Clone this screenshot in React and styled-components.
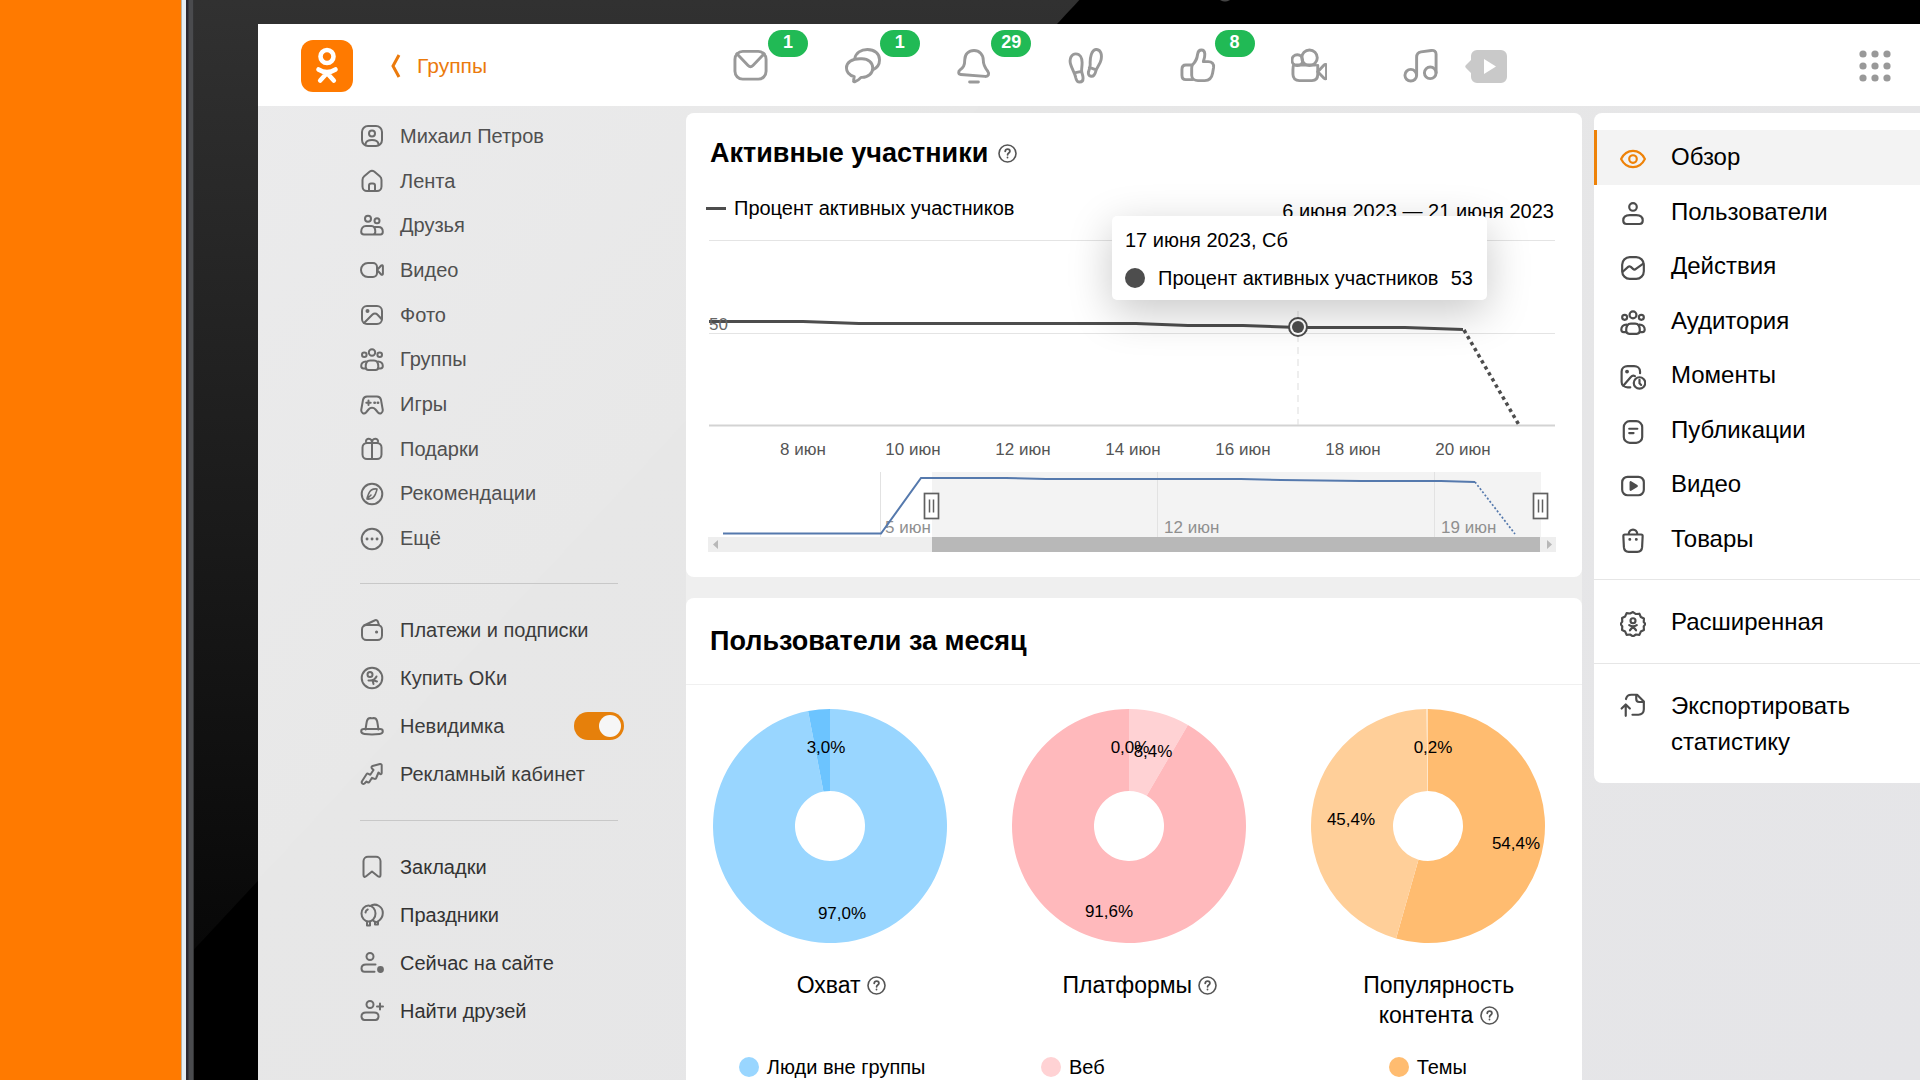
import React, { useState } from 'react';
import styled, { createGlobalStyle } from 'styled-components';

const GlobalStyle = createGlobalStyle`
  * {
    box-sizing: border-box;
  }

  body {
    margin: 0;
    background-color: #ff7a00;
    font-family: "Liberation Sans", Arial, sans-serif;
    font-size: 20px;
    color: #000;
  }
`;

const Page = styled.div`
  display: flex;
  height: 100vh;
  overflow: hidden;
`;

const Backdrop = styled.div`
  flex: 0 0 181px;
  background-color: #ff7a00;
`;

const TabletEdge = styled.div`
  flex: 0 0 13px;
  background: linear-gradient(90deg, #b9b4a8 1px, #e6edf4 1px 5px, #2b2830 5px 7px, #4a4b4e 8px 12px, #1c1c1c 13px);
`;

/* black glass with a diagonal highlight in the top left corner */
const Bezel = styled.div`
  flex: 1;
  min-width: 0;
  display: flex;
  padding: 24px 0 0 64px;
  background:
    radial-gradient(circle at 1031px -7px, #444 8px, transparent 9px),
    linear-gradient(133deg, transparent 647px, #000 648px),
    linear-gradient(#313131, #080808 944px);
`;

const Screen = styled.div`
  flex: 1;
  min-width: 0;
  display: flex;
  flex-direction: column;
  background: linear-gradient(133deg, #ebebec, #e8e8e8 583px, #e7e7e7 584px, #e5e5e8);
`;

const Header = styled.header`
  flex: 0 0 82px;
  display: flex;
  align-items: center;
  padding: 2px 29px 0 0;
  background-color: #fff;
`;

const Brand = styled.div`
  flex: 0 0 475px;
  display: flex;
  align-items: center;
  padding-left: 43px;
`;

const LogoLink = styled.a`
  display: flex;
`;

const BackLink = styled.a`
  display: flex;
  align-items: center;
  gap: 16px;
  margin-left: 37px;
  color: #eb7a0c;
  font-size: 21px;
  text-decoration: none;
`;

const Toolbar = styled.nav`
  flex: 0 1 706px;
  display: flex;
  justify-content: space-between;
`;

const ToolbarLink = styled.a`
  position: relative;
  display: flex;
  color: #999;
`;

const Badge = styled.span`
  position: absolute;
  left: 35px;
  top: -18px;
  width: 40px;
  height: 27px;
  border-radius: 14px;
  background-color: #21ba55;
  color: #fff;
  font-size: 18px;
  font-weight: bold;
  line-height: 24px;
  text-align: center;
`;

const PlayButton = styled.button`
  display: flex;
  margin-left: 26px;
  padding: 0;
  border: none;
  background: none;
  cursor: pointer;
`;

const AppsButton = styled(PlayButton)`
  margin-left: auto;
`;

const Body = styled.div`
  flex: 1;
  min-height: 0;
  display: flex;
  padding-top: 7px;
`;

const Sidebar = styled.aside`
  flex: 0 0 428px;
  padding: 1px 68px 0 102px;
`;

const NavList = styled.ul`
  display: grid;
  grid-auto-rows: 1fr;
  height: ${(p) => p.$height}px;
  margin: 0;
  padding: 0;
  list-style: none;
`;

const NavRow = styled.li`
  display: flex;
  align-items: center;
  justify-content: space-between;
  margin-right: -6px;
`;

const NavLink = styled.a`
  display: flex;
  align-items: center;
  gap: 16px;
  color: ${(p) => p.$color};
  text-decoration: none;
  white-space: nowrap;

  svg {
    color: #6c6c6c;
  }
`;

const Divider = styled.hr`
  height: 1px;
  margin: 22px 0;
  border: none;
  background-color: #c8c8c8;
`;

const Switch = styled.input`
  appearance: none;
  width: 50px;
  height: 28px;
  margin: 0;
  padding: 3px;
  border-radius: 14px;
  background-color: ${(p) => (p.checked ? '#e6800b' : '#b5b5b5')};
  cursor: pointer;

  &::before {
    content: '';
    display: block;
    width: 22px;
    height: 22px;
    margin-left: ${(p) => (p.checked ? '22px' : '0')};
    border-radius: 50%;
    background-color: #f6f6f6;
  }
`;

const Main = styled.main`
  flex: 1;
  min-width: 0;
  display: flex;
  flex-direction: column;
  gap: 21px;
  border-radius: 8px 8px 0 0;
  background-color: #efefef;
`;

const Card = styled.section`
  flex: ${(p) => (p.$fill ? '1 0 auto' : '0 0 auto')};
  position: relative;
  border-radius: ${(p) => (p.$fill ? '8px 8px 0 0' : '8px')};
  background-color: #fff;
`;

const CardTitle = styled.h2`
  display: flex;
  align-items: center;
  gap: 10px;
  margin: 0;
  padding: ${(p) => p.$pad};
  font-size: 27px;
  line-height: 32px;
`;

const HelpButton = styled.button`
  display: inline-flex;
  padding: 0;
  border: none;
  background: none;
  color: #555;
  vertical-align: -2px;
  cursor: pointer;
`;

const ChartHead = styled.div`
  display: flex;
  justify-content: space-between;
  height: 27px;
  margin-top: 27px;
  padding: 0 28px 0 20px;
  line-height: 24px;
`;

const ChartLegend = styled.div`
  display: flex;
  align-items: center;
  align-self: flex-start;
  gap: 8px;

  &::before {
    content: '';
    width: 20px;
    height: 3px;
    background-color: #4d4d4d;
  }
`;

const Period = styled.div`
  align-self: flex-end;
`;

const ChartSvg = styled.svg`
  display: block;
  width: 100%;
  height: auto;
`;

const Tooltip = styled.div`
  position: absolute;
  top: 103px;
  left: 426px;
  width: 375px;
  padding: 12px 14px 10px 13px;
  border-radius: 5px;
  background-color: #fff;
  box-shadow: 0 12px 44px rgba(0, 0, 0, 0.22);
  line-height: 24px;
`;

const TooltipRow = styled.div`
  display: flex;
  align-items: center;
  margin-top: 14px;
`;

const Dot = styled.span`
  flex: 0 0 20px;
  height: 20px;
  border-radius: 50%;
  background-color: ${(p) => p.$color};
`;

const TooltipLabel = styled.span`
  flex: 1;
  margin-left: 13px;
`;

const PieGrid = styled.div`
  display: grid;
  grid-template-columns: repeat(3, 1fr);
  margin-top: 27px;
  border-top: 1px solid #f0f0f0;
  padding-top: 24px;
`;

const PieColumn = styled.div`
  display: grid;
  grid-template-rows: 234px 60px auto;
  row-gap: 26px;
  justify-items: center;
`;

const PieSvg = styled.svg`
  width: 234px;
  margin-right: 10px;
  overflow: visible;
`;

const PieTitle = styled.h3`
  width: 190px;
  margin: 1px 0 0 12px;
  font-size: 23px;
  font-weight: normal;
  line-height: 30px;
  text-align: center;
`;

const PieLegend = styled.div`
  display: flex;
  align-items: center;
  gap: 8px;
  width: ${(p) => p.$width}px;
  margin-right: 10px;
  line-height: 24px;
  white-space: nowrap;
`;

const Panel = styled.aside`
  flex: 0 0 326px;
  align-self: flex-start;
  margin-left: 12px;
  padding: 17px 0 23px;
  border-radius: 8px 0 0 8px;
  background-color: #fff;
`;

const PanelList = styled.div`
  display: grid;
  grid-auto-rows: 1fr;
  height: 436px;
`;

const PanelLink = styled.a`
  display: flex;
  align-items: ${(p) => (p.$multiline ? 'flex-start' : 'center')};
  gap: 25px;
  padding-left: 23px;
  border-left: 3px solid ${(p) => (p.$active ? '#ee8208' : 'transparent')};
  background-color: ${(p) => (p.$active ? '#f3f3f3' : 'transparent')};
  color: #000;
  font-size: 24px;
  line-height: 36px;
  text-decoration: none;

  svg {
    flex: none;
    margin-top: 4px;
    color: ${(p) => (p.$active ? '#ee8208' : '#4c4c4c')};
  }
`;

const PanelSection = styled.div`
  margin-top: ${(p) => p.$top}px;
  padding-top: 24px;
  border-top: 1px solid #e6e6e6;
`;

const icons = {
  profile: (
    <>
      <rect x="2" y="2" width="20" height="20" rx="6" />
      <circle cx="12" cy="9.5" r="3" />
      <path d="M5.500 20c.5-3 3.600-4 6.500-4s6 1 6.500 4" />
    </>
  ),
  feed: (
    <>
      <path d="M2.500 11c0-1.500.6-2.800 1.700-3.700l5.600-4.700a3.400 3.400 0 0 1 4.400 0l5.600 4.700c1.100.9 1.700 2.200 1.700 3.700v6.500a4.500 4.500 0 0 1-4.500 4.500h-10a4.500 4.500 0 0 1-4.500-4.500z" />
      <path d="M9 22v-5.500a2 2 0 0 1 2-2h2a2 2 0 0 1 2 2V22" />
    </>
  ),
  friends: (
    <>
      <circle cx="8" cy="4.800" r="3" />
      <circle cx="17" cy="6.800" r="2.500" />
      <path d="M6 12h5.500c2.500 0 3.800 2.500 3.800 5.800 0 1.800-1 2.800-2.300 2.800H4c-1.800 0-2.800-1-2.800-2.800C1.200 14.500 3 12 6 12zM14 13h4.500c2.600 0 4.300 2 4.300 4.800 0 1.800-1 2.800-2.300 2.800H13" />
    </>
  ),
  video: (
    <>
      <path d="M8 5h5a4 4 0 0 1 4 4v6a4 4 0 0 1-4 4H8a7 7 0 0 1 0-14z" />
      <path d="M17.500 11.500l3.700-4c.7-.7 1.700-.3 1.700.7v7.600c0 1-1 1.400-1.700.7l-3.700-4" />
    </>
  ),
  photo: (
    <>
      <rect x="2" y="3" width="20" height="18" rx="5" />
      <circle cx="7.500" cy="8" r="1" fill="currentColor" />
      <path d="M4 20l8.500-8.500c1.500-1.500 3.500-1.500 4.800 0L21.500 16" />
    </>
  ),
  groups: (
    <>
      <circle cx="12" cy="4.500" r="3.200" />
      <circle cx="4.300" cy="6.800" r="2.300" />
      <circle cx="19.700" cy="6.800" r="2.300" />
      <path d="M10 12.500h4c3 0 4.300 2.600 4.300 6.200 0 2-1 3.300-2.800 3.300h-7c-1.800 0-2.800-1.300-2.800-3.300 0-3.600 1.300-6.200 4.300-6.200z" />
      <path d="M6 13.500c-3 0-4.800 2-4.800 4.500 0 1.600.8 2.400 2.300 2.400h2M18 13.500c3 0 4.800 2 4.800 4.500 0 1.600-.8 2.400-2.300 2.400h-2" />
    </>
  ),
  games: (
    <>
      <path d="M7 3.500h10c2 0 3.500 1.300 4 3.300l1.700 9.700c.5 3.500-2.700 5.200-4.700 3l-2.500-3c-2-2.200-5-2.200-7 0l-2.500 3c-2 2.200-5.200.5-4.700-3L3 6.800c.5-2 2-3.300 4-3.300z" />
      <path d="M6.300 9.700h4.400M8.500 7.500v4.400" />
      <path d="M14.500 9.700h.3M17.800 9.700h.3" strokeWidth="2.600" />
    </>
  ),
  gifts: (
    <>
      <rect x="2.500" y="6" width="19" height="16" rx="4.500" />
      <path d="M12 6v16M12 6c0-6-6.500-5-6-1.500.2 1 1 1.500 1 1.500M12 6c0-6 6.500-5 6-1.500-.2 1-1 1.500-1 1.500" />
    </>
  ),
  compass: (
    <>
      <circle cx="12" cy="12" r="10.300" />
      <path d="M17 7c-4-.5-7 1.500-8.300 4.600C7.800 13.700 7.200 15 7 17c4 .500 7-1.500 8.300-4.600C16.200 10.300 16.800 9 17 7zM7 17l4-4" strokeWidth="1.600" />
    </>
  ),
  more: (
    <>
      <circle cx="12" cy="12" r="10.300" />
      <path d="M7 12h.1M12 12h.1M17 12h.1" strokeWidth="2.800" />
    </>
  ),
  wallet: (
    <>
      <rect x="2" y="7" width="20" height="15" rx="4.500" />
      <path d="M4 7.500l10.500-5c1.500-.8 2.800-.3 3.400 1.200l1.100 3.300" />
      <path d="M16.500 14h.1" strokeWidth="3" />
    </>
  ),
  oki: (
    <>
      <circle cx="12" cy="12" r="10.300" />
      <circle cx="10" cy="8.500" r="2.500" />
      <path d="M8.500 14.500c3.500.5 6.500-1 8-4M12.500 14l1 4M12.500 14l4.500 1.500" />
    </>
  ),
  hat: (
    <>
      <path d="M5.500 15.500c.5-3 .8-5.500 1.300-8C7.300 5 8.500 4 10.300 4c1.200.5 2.200.5 3.400 0 1.800 0 3 1 3.500 3.500.5 2.500.8 5 1.300 8" />
      <path d="M4 15h16c1.800 0 2.800 1 2.800 2.300 0 1.400-1 2.400-3.300 2.700-4 .5-11 .5-15 0-2.300-.3-3.300-1.300-3.300-2.700C1.200 16 2.200 15 4 15z" />
    </>
  ),
  ads: (
    <path d="M12.500 4l7.500-2c1-.2 1.700.3 1.700 1.300V11c0 1.200-1 1.600-1.900.8l-1.300-1.300-2.300 5.500c-.5 1-1.200 1.200-2.200.7L12 15.800l-2.500 4c-.4.700-1 .8-1.800.5L6.500 19.500l-2 2c-1.500 1.200-3.500-.5-2.500-2.200l4.500-7c.5-.8 1.200-.9 2-.5l1.800 1L13.500 8l-1.500-1.500c-.8-.9-.6-2.200.5-2.500z" />
  ),
  bookmark: (
    <path d="M3.500 6A4.500 4.500 0 0 1 8 1.800h8A4.500 4.500 0 0 1 20.500 6v14c0 1.800-1.300 2.400-2.600 1.300L12 16.500l-5.900 4.800c-1.300 1.100-2.600.5-2.600-1.300z" />
  ),
  balloons: (
    <>
      <ellipse cx="8.500" cy="10.500" rx="7" ry="8" />
      <path d="M10 3c6-3.500 12.800.5 12.800 7 0 3.500-1.800 6.500-4.800 8.500M13 17.500c1 1 2 1.500 3.500 1.500M5.500 9.500c.2-1.500 1-2.500 2.200-3" />
      <path d="M7 19.500v3M10 19.500v3M15 19v2.500M18 18.500v2.500M7 22.500h3M15 21.500h3" />
    </>
  ),
  online: (
    <>
      <circle cx="10" cy="5.500" r="3.500" />
      <path d="M15.500 13.500H6c-3 0-4.500 1.800-4.500 4 0 2 1.300 3.200 3 3.200h10" />
      <circle cx="20.500" cy="18.500" r="2.400" fill="currentColor" />
    </>
  ),
  addFriend: (
    <>
      <circle cx="10" cy="5.500" r="3.500" />
      <path d="M6 13.500h8c3 0 4.500 1.600 4.500 3.800 0 2.300-1.300 3.700-3 3.700h-11c-1.700 0-3-1.400-3-3.700 0-2.200 1.500-3.800 4.500-3.800zM17 7.500h6M20 4.500v6" />
    </>
  ),
  eye: (
    <>
      <path d="M1 12c2.500-5 6.500-7.500 11-7.500s8.500 2.500 11 7.500c-2.500 5-6.500 7.500-11 7.500S3.500 17 1 12z" />
      <circle cx="12" cy="12" r="3.500" />
    </>
  ),
  user: (
    <>
      <circle cx="12" cy="5.500" r="3.500" />
      <path d="M9 13h6c4 0 6 2.200 6 5 0 2-1.200 3.200-3 3.200H6c-1.800 0-3-1.200-3-3.200 0-2.800 2-5 6-5z" />
    </>
  ),
  activity: (
    <>
      <rect x="2" y="2" width="20" height="20" rx="7" />
      <path d="M2.500 15.500L7.500 11c.8-.7 1.700-.6 2.500 0l2 1.800c.9.800 1.900.7 2.700 0L21.500 8" />
    </>
  ),
  moments: (
    <>
      <path d="M9.500 21.500H7c-3 0-5.500-2-5.500-5V7c0-3 2.500-5 5.500-5h6c3 0 5.500 2 5.500 5v1.500" />
      <circle cx="6.500" cy="7" r=".8" fill="currentColor" />
      <path d="M3 20l7-8c1-1.200 2.500-1.600 3.800-.8" />
      <circle cx="18" cy="17.500" r="5.300" />
      <path d="M18 14.500v3.300l1.500 1.500" />
    </>
  ),
  posts: (
    <>
      <rect x="3.500" y="2" width="17" height="20" rx="5.500" />
      <path d="M8.500 9h7.500M8.500 13h4" />
    </>
  ),
  player: (
    <>
      <rect x="2" y="3.500" width="20" height="17" rx="5" />
      <path d="M9.800 8.500v7l5.700-3.500z" fill="currentColor" />
    </>
  ),
  goods: (
    <>
      <path d="M4.500 6h15c1 0 1.500.7 1.400 1.700l-.5 10c-.2 2.700-1.900 4.300-4.400 4.300H8c-2.500 0-4.200-1.600-4.400-4.300l-.5-10C3 6.700 3.500 6 4.500 6zM8 6c0-6 8-6 8 0" />
      <path d="M9 10.500h.1M15 10.500h.1" strokeWidth="2.600" />
    </>
  ),
  advanced: (
    <>
      <path d="M12 1l2.700 1.800 3.200-.3 1.300 3 2.900 1.500-.2 3.200L23.500 12l-1.600 2.300.2 3.200-2.900 1.500-1.300 3-3.200-.3L12 23.500l-2.700-1.800-3.200.3-1.300-3-2.900-1.500.2-3.200L.5 12l1.600-2.300-.2-3.200 2.900-1.500 1.300-3 3.200.3z" />
      <circle cx="12" cy="9" r="2.300" />
      <path d="M8.500 13c2.300 1.500 4.700 1.500 7 0M12 14.300l-2.800 3.500M12 14.300l2.800 3.500" />
    </>
  ),
  exportFile: (
    <>
      <path d="M5.500 6.500C6 4 8 2.500 10.500 2.500h5.300L22 8.700V16c0 3-2 5-5 5h-5.500" />
      <path d="M15 3v3.500c0 1.700 1 2.700 2.700 2.700h3.800M5.300 22V12M1.500 15.300l3.800-3.800 3.800 3.800" />
    </>
  ),
};

// the toolbar set is drawn on a bigger 36px grid
const toolbarIcons = {
  mail: (
    <>
      <rect x="2" y="3.500" width="32" height="28.500" rx="8" />
      <path d="M4 6l11.500 12c1.500 1.500 3.500 1.500 5 0L32 6" />
    </>
  ),
  chat: (
    <>
      <path d="M15.500 11h2c6.500 0 11 4 11 9.500s-4.500 9.700-11 9.700h-1c-2 2.300-4.500 4-6.500 4.500-1 .2-1.500-.4-1.200-1.300l.7-4C4.500 28 1.500 24.500 1.500 20.500 1.500 15 7 11 15.500 11z" />
      <path d="M10 11C11 5 16.500 1.500 23 1.500c7.500 0 12.500 4.500 12.500 10.500 0 4.500-2.500 8.500-7 10.500" />
    </>
  ),
  bell: (
    <path d="M18.500 2.500c-5.500 0-9.500 4-9.500 9.500 0 6-1.500 8-4.800 10.500-2 1.500-2 4.500.6 4.700l25 2c3.700.3 4.700-2.700 3-5-2.500-3-4.800-6-4.800-12 0-5.500-4-9.700-9.500-9.700zM14 35h9" />
  ),
  steps: (
    <>
      <path d="M8 6c4.500 0 6.500 4.500 6.500 9 0 4-.5 5.500-.5 8 0 3 1.500 5 1.500 8 0 2.500-1.500 4-3.500 4-2.500 0-3.500-2-4-4.500C7.300 26 4 22 2.500 16 1.300 11 3.500 6 8 6zM6.500 25.500l7.500-1.500" />
      <path d="M29.500 1.500c4.500.5 5.500 5.500 4.500 10.500-1.200 5.500-4.500 8-5.500 12-.7 2.800-2 5.500-4.800 5-2.500-.4-3.200-2.500-2.500-4.800.7-2.500 1.800-4.700 1.600-7.700-.3-6 1.200-15.500 6.700-15zM22 20l7 2.500" />
    </>
  ),
  like: (
    <>
      <path d="M13 17c4-3.500 4.500-6.500 5.200-11 .8-5 6.800-5.300 7.300 0 .2 3-.8 5.500-1.500 8h5c4 0 6 2.300 5.500 6l-1 6c-.8 4.500-3.500 7.500-8 7.500h-7c-3 0-6.500-1.500-6.500-5.500v-7c0-1.500.2-3 1-4z" />
      <path d="M11.500 17.500H6c-2.500 0-4 1.500-4 4.500v6c0 3 1.500 4.500 4 4.500h7" />
    </>
  ),
  camera: (
    <>
      <circle cx="6.500" cy="12.500" r="5.500" />
      <circle cx="19" cy="10" r="8" />
      <path d="M3 17c-1 1.500-1 3-1 5v5c0 4 2.500 6.500 6.500 6.500h13c4 0 6-2.500 6-6.500V18M5 17.500h20" />
      <path d="M27.500 24.500l6.500-7c1.200-1.200 2.500-.7 2.500 1V30c0 1.700-1.300 2.200-2.500 1z" />
    </>
  ),
  music: (
    <>
      <circle cx="8" cy="28" r="6" />
      <circle cx="28" cy="25.500" r="6" />
      <path d="M14 28V9.500c0-3 1.500-5 4.500-5.500l10.500-1.500c3-.4 5 1 5 4v19" />
    </>
  ),
};

const toolbar = [
  { name: 'mail', title: 'Сообщения', count: 1 },
  { name: 'chat', title: 'Обсуждения', count: 1 },
  { name: 'bell', title: 'Оповещения', count: 29 },
  { name: 'steps', title: 'Гости' },
  { name: 'like', title: 'События', count: 8 },
  { name: 'camera', title: 'Видео' },
  { name: 'music', title: 'Музыка' },
];

const mainLinks = [
  ['profile', 'Михаил Петров'],
  ['feed', 'Лента'],
  ['friends', 'Друзья'],
  ['video', 'Видео'],
  ['photo', 'Фото'],
  ['groups', 'Группы'],
  ['games', 'Игры'],
  ['gifts', 'Подарки'],
  ['compass', 'Рекомендации'],
  ['more', 'Ещё'],
];

const serviceLinks = [
  ['wallet', 'Платежи и подписки'],
  ['oki', 'Купить ОКи'],
  ['hat', 'Невидимка'],
  ['ads', 'Рекламный кабинет'],
];

const extraLinks = [
  ['bookmark', 'Закладки'],
  ['balloons', 'Праздники'],
  ['online', 'Сейчас на сайте'],
  ['addFriend', 'Найти друзей'],
];

const panelLinks = [
  ['eye', 'Обзор'],
  ['user', 'Пользователи'],
  ['activity', 'Действия'],
  ['groups', 'Аудитория'],
  ['moments', 'Моменты'],
  ['posts', 'Публикации'],
  ['player', 'Видео'],
  ['goods', 'Товары'],
];

// slices go clockwise from the top, labels are placed in donut coordinates
const pies = [
  {
    title: 'Охват',
    slices: [
      { value: 97, color: '#99d6ff' },
      { value: 3, color: '#6cc4ff' },
    ],
    labels: [
      ['3,0%', 113, 38],
      ['97,0%', 129, 204],
    ],
    legend: { text: 'Люди вне группы', color: '#99d6ff', width: 183 },
  },
  {
    title: 'Платформы',
    slices: [
      { value: 8.4, color: '#ffd2d4' },
      { value: 91.6, color: '#ffb9bc' },
    ],
    labels: [
      ['0,0%', 118, 38],
      ['8,4%', 141, 42],
      ['91,6%', 97, 202],
    ],
    legend: { text: 'Веб', color: '#ffd2d4', width: 176 },
  },
  {
    title: 'Популярность контента',
    slices: [
      { value: 54.4, color: '#ffbc70' },
      { value: 45.4, color: '#ffcf99' },
      { value: 0.2, color: '#ffe3c2' },
    ],
    labels: [
      ['0,2%', 122, 38],
      ['45,4%', 40, 110],
      ['54,4%', 205, 134],
    ],
    legend: { text: 'Темы', color: '#ffbc70', width: 78 },
  },
];

const Icon = ({ name, size = 24 }) => (
  <svg width={size} height={size} viewBox="0 0 24 24" fill="none" stroke="currentColor" strokeWidth="2" strokeLinecap="round" strokeLinejoin="round" aria-hidden="true">
    {icons[name]}
  </svg>
);

const ToolbarIcon = ({ name }) => (
  <svg width="36" height="36" viewBox="0 0 37 37" fill="none" stroke="currentColor" strokeWidth="3" strokeLinecap="round" strokeLinejoin="round" aria-hidden="true">
    {toolbarIcons[name]}
  </svg>
);

const Help = () => (
  <HelpButton type="button" aria-label="Подсказка">
    <svg width="19" height="19" viewBox="0 0 19 19" fill="none" stroke="currentColor" strokeWidth="1.600" strokeLinecap="round">
      <circle cx="9.5" cy="9.5" r="8.500" />
      <path d="M7.200 7.300c.3-3 4.700-3 4.700 0 0 1.700-2.300 1.800-2.300 3.500M9.500 13.400v.1" strokeWidth="1.800" />
    </svg>
  </HelpButton>
);

const Logo = () => (
  <svg width="52" height="52" viewBox="0 0 52 52" fill="none" stroke="#fff" strokeWidth="4.600" strokeLinecap="round">
    <rect width="52" height="52" rx="12" fill="#ff7a00" stroke="none" />
    <circle cx="26" cy="16.500" r="6.500" />
    <path d="M17.500 29.500c5.500 3.500 11.500 3.500 17 0M26 33l-6.800 7.500M26 33l6.800 7.500" />
  </svg>
);

const SideLinks = ({ links, height, color, children }) => (
  <NavList $height={height}>
    {links.map(([icon, text]) => (
      <NavRow key={text}>
        <NavLink href="#" $color={color} id={`link-${icon}`}>
          <Icon name={icon} />
          {text}
        </NavLink>
        {icon === 'hat' && children}
      </NavRow>
    ))}
  </NavList>
);

const ActivityChart = () => (
  <ChartSvg viewBox="0 0 896 354" fontSize="17" fill="none">
    <path d="M23 17.500h846M23 110.500h846" stroke="#e4e4e4" />
    <path d="M23 202.500h846" stroke="#d3d3d3" strokeWidth="2" />
    <path d="M612 88v114" stroke="#ddd" strokeDasharray="7 5" />
    <path d="M23 98.500h94l56 2h277l52 2h55l55 2h107l58 2" stroke="#4d4d4d" strokeWidth="3" />
    <text x="23" y="107" fill="#666">50</text>
    <path d="M778 107l55 95" stroke="#4d4d4d" strokeWidth="3.500" strokeDasharray="3.500 3.500" />
    <circle cx="612" cy="104" r="9" fill="#fff" stroke="#4d4d4d" strokeWidth="2" />
    <circle cx="612" cy="104" r="6" fill="#4d4d4d" />
    {[8, 10, 12, 14, 16, 18, 20].map((day, i) => (
      <text key={day} x={117 + i * 110} y="232" textAnchor="middle" fill="#555">{`${day} июн`}</text>
    ))}

    {/* range selector */}
    <rect x="246" y="249" width="609" height="66" fill="#f3f3f3" />
    <path d="M194.500 249v65M471.500 249v65M748.500 249v65" stroke="#e2e2e2" />
    <g fill="#8f8f8f">
      <text x="199" y="310">5 июн</text>
      <text x="478" y="310">12 июн</text>
      <text x="755" y="310">19 июн</text>
    </g>
    <path d="M37 310.500h158l40-55.500h85l40 1h195l40 1 80 1h80l34 1" stroke="#5579ad" strokeWidth="2" />
    <path d="M789 259l40 52" stroke="#5579ad" strokeWidth="1.700" strokeDasharray="2 2" />
    <rect x="22" y="314" width="848" height="15" fill="#eee" />
    <rect x="246" y="314" width="608" height="15" fill="#b8b8b8" />
    <path d="M32 317v9l-5-4.500zM861 317v9l5-4.500z" fill="#b8b8b8" />
    {[238.5, 847.5].map((x) => (
      <g key={x} stroke="#606060">
        <rect x={x} y="270.500" width="14" height="25" fill="#fff" strokeWidth="1.700" />
        <path d={`M${x + 5} 276.500v13M${x + 9} 276.500v13`} strokeWidth="1.500" />
      </g>
    ))}
  </ChartSvg>
);

const R = 117;

const point = (share, r) => {
  const a = share * 2 * Math.PI;
  return `${R + r * Math.sin(a)} ${R - r * Math.cos(a)}`;
};

const Pie = ({ slices, labels, title }) => {
  let start = 0;
  return (
    <PieSvg viewBox="0 0 234 234" role="img" aria-label={title}>
      {slices.map(({ value, color }) => {
        const from = start;
        const to = start + value / 100;
        const large = value > 50 ? 1 : 0;
        start = to;
        return (
          <path
            key={color}
            fill={color}
            d={`M${point(from, R)}A${R} ${R} 0 ${large} 1 ${point(to, R)}L${point(to, 35)}A35 35 0 ${large} 0 ${point(from, 35)}Z`}
          />
        );
      })}
      {labels.map(([text, x, y]) => (
        <text key={text} x={x} y={y} dy="6" fontSize="17" textAnchor="middle" fill="#000">{text}</text>
      ))}
    </PieSvg>
  );
};

const App = () => {
  const [invisible, setInvisible] = useState(true);

  return (
    <>
      <GlobalStyle />
      <Page>
        <Backdrop />
        <TabletEdge />
        <Bezel>
          <Screen>
            <Header>
              <Brand>
                <LogoLink href="#" aria-label="Одноклассники">
                  <Logo />
                </LogoLink>
                <BackLink href="#">
                  <svg width="11" height="24" viewBox="0 0 11 24" fill="none" stroke="currentColor" strokeWidth="3">
                    <path d="M9 1L3 12l6 11" />
                  </svg>
                  Группы
                </BackLink>
              </Brand>
              <Toolbar>
                {toolbar.map(({ name, title, count }) => (
                  <ToolbarLink href="#" key={name} aria-label={title}>
                    <ToolbarIcon name={name} />
                    {count && <Badge>{count}</Badge>}
                  </ToolbarLink>
                ))}
              </Toolbar>
              <PlayButton type="button" aria-label="Плеер">
                <svg width="42" height="33" viewBox="0 0 42 33">
                  <path d="M12 0h24a6 6 0 0 1 6 6v21a6 6 0 0 1-6 6H12a6 6 0 0 1-6-6v-4L1 18c-1-1-1-2 0-3l5-5V6a6 6 0 0 1 6-6z" fill="#c9c9c9" />
                  <path d="M19 9v15l12-7.500z" fill="#fff" />
                </svg>
              </PlayButton>
              <AppsButton type="button" aria-label="Сервисы">
                <svg width="32" height="32" viewBox="0 0 32 32" fill="#999">
                  {[4, 16, 28].map((y) => [4, 16, 28].map((x) => <circle key={`${x}-${y}`} cx={x} cy={y} r="3.600" />))}
                </svg>
              </AppsButton>
            </Header>

            <Body>
              <Sidebar>
                <SideLinks links={mainLinks} height={447} color="#505050" />
                <Divider />
                <SideLinks links={serviceLinks} height={192} color="#3c3c3c">
                  <Switch
                    type="checkbox"
                    aria-labelledby="link-hat"
                    checked={invisible}
                    onChange={(e) => setInvisible(e.target.checked)}
                  />
                </SideLinks>
                <Divider />
                <SideLinks links={extraLinks} height={192} color="#333" />
              </Sidebar>

              <Main>
                <Card>
                  <CardTitle $pad="24px 24px 0">
                    Активные участники
                    <Help />
                  </CardTitle>
                  <ChartHead>
                    <ChartLegend>Процент активных участников</ChartLegend>
                    <Period>6 июня 2023 — 21 июня 2023</Period>
                  </ChartHead>
                  <ActivityChart />
                  <Tooltip>
                    17 июня 2023, Сб
                    <TooltipRow>
                      <Dot $color="#4d4d4d" />
                      <TooltipLabel>Процент активных участников</TooltipLabel>
                      53
                    </TooltipRow>
                  </Tooltip>
                </Card>

                <Card $fill>
                  <CardTitle $pad="27px 24px 0">Пользователи за месяц</CardTitle>
                  <PieGrid>
                    {pies.map(({ title, slices, labels, legend }) => (
                      <PieColumn key={title}>
                        <Pie slices={slices} labels={labels} title={title} />
                        <PieTitle>
                          {title} <Help />
                        </PieTitle>
                        <PieLegend $width={legend.width}>
                          <Dot $color={legend.color} />
                          {legend.text}
                        </PieLegend>
                      </PieColumn>
                    ))}
                  </PieGrid>
                </Card>
              </Main>

              <Panel>
                <PanelList>
                  {panelLinks.map(([icon, text], i) => (
                    <PanelLink href="#" key={text} $active={i === 0}>
                      <Icon name={icon} size={26} />
                      {text}
                    </PanelLink>
                  ))}
                </PanelList>
                <PanelSection $top={13}>
                  <PanelLink href="#">
                    <Icon name="advanced" size={26} />
                    Расширенная
                  </PanelLink>
                </PanelSection>
                <PanelSection $top={23}>
                  <PanelLink href="#" $multiline>
                    <Icon name="exportFile" size={26} />
                    Экспортировать статистику
                  </PanelLink>
                </PanelSection>
              </Panel>
            </Body>
          </Screen>
        </Bezel>
      </Page>
    </>
  );
};

export default App;
